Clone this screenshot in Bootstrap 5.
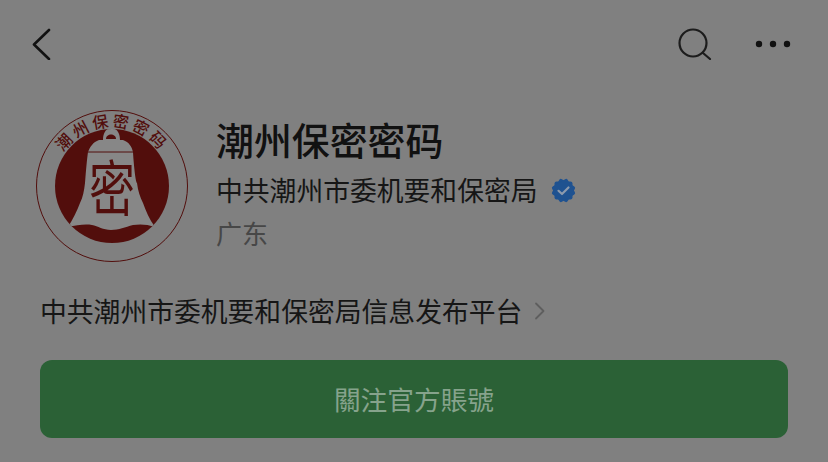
<!DOCTYPE html>
<html lang="zh-CN">
<head>
  <meta charset="UTF-8" />
  <title>潮州保密密码</title>
  <link href="https://cdn.jsdelivr.net/npm/bootstrap@5.3.0/dist/css/bootstrap.min.css" rel="stylesheet" />
  <style>
    body {
      background: #808080;
      font-family: "Noto Sans CJK SC", "Liberation Sans", sans-serif;
      color: #161616;
      height: 462px;
      overflow: hidden;
    }
    .top-icons { padding: 28px 37px 0 32px; height: 109px; }
    .search-gap { gap: 43px; }
    .profile-row { padding-left: 35px; gap: 27px; height: 153px; }
    .logo-ring { width: 154px; height: 154px; overflow: visible; }
    .logo-label { font-size: 16px; font-weight: 500; letter-spacing: 3px; fill: #520e0c; }
    .seal-char { font-size: 46px; fill: #520e0c; }
    .acct-name { font-size: 37.9px; font-weight: 500; line-height: 52px; color: #111; margin: 4px 0 3px; }
    .acct-owner { font-size: 26.8px; line-height: 44px; gap: 12px; }
    .acct-region { font-size: 26px; line-height: 42px; color: #474747; }
    .acct-desc { font-size: 26.8px; line-height: 40px; padding-left: 40px; margin-top: 29px; gap: 12px; }
    .follow-btn {
      width: 748px;
      height: 78px;
      margin: 29px 0 0 40px;
      background: #2b6136;
      border: 0;
      border-radius: 12px;
      color: #86a38c;
      font-family: "Noto Sans CJK TC", sans-serif;
      font-size: 26.7px;
    }
    .follow-btn:hover, .follow-btn:active { background: #2b6136 !important; color: #86a38c !important; }
  </style>
</head>
<body>

<!-- top bar -->
<div class="top-icons d-flex justify-content-between">
  <svg width="20" height="32" viewBox="0 0 20 32" fill="none" stroke="#121212" stroke-width="2.6" stroke-linecap="round" stroke-linejoin="round">
    <path d="M17 2 2 16.5 17 31" />
  </svg>
  <div class="d-flex search-gap">
    <svg width="34" height="32" viewBox="0 0 34 32" fill="none" stroke="#1c1c1c" stroke-width="2.2" stroke-linecap="round">
      <circle cx="15" cy="15" r="13.5" />
      <path d="M25 25 32 31" />
    </svg>
    <svg width="36" height="32" viewBox="0 0 36 32" fill="#111">
      <circle cx="4" cy="16" r="3.2" />
      <circle cx="18" cy="16" r="3.2" />
      <circle cx="32" cy="16" r="3.2" />
    </svg>
  </div>
</div>

<!-- account header -->
<div class="profile-row d-flex">
  <svg class="logo-ring flex-shrink-0" viewBox="0 0 154 154">
    <defs>
      <path id="labelArc" d="M18 77 A59 59 0 0 1 136 77" />
      <clipPath id="discClip"><circle cx="77" cy="77" r="57" /></clipPath>
    </defs>
    <circle cx="77" cy="77" r="75.5" fill="none" stroke="#520e0c" stroke-width="1" />
    <circle cx="77" cy="77" r="57" fill="#520e0c" />
    <!-- bell -->
    <path fill="#878787" clip-path="url(#discClip)" d="M68 31 C68 23 72 19 76 19 C81 19 85 23 85 31 H88 C94 33 97 38 98 43 C99 60 101 74 102 74 C103 82 105 88 108 94 C111 102 114 110 120 118 C112 115 104 115 98 116 C90 118 84 121 76 121 C68 121 63 117 57 116 C50 115 42 116 33 118 C38 110 42 102 45 94 C48 88 49 82 50 74 C51 60 52 50 53 43 C55 38 58 33 64 31 Z" />
    <path fill="#520e0c" d="M71 30 C71 24 81 24 81 30 Z" />
    <path stroke="#520e0c" stroke-width="1" d="M53 43 H98" />
    <text class="seal-char" text-anchor="middle" transform="translate(77 102) scale(1 1.3)">密</text>
    <text class="logo-label"><textPath href="#labelArc" startOffset="50%" text-anchor="middle">潮州保密密码</textPath></text>
  </svg>
  <div>
    <div class="acct-name">潮州保密密码</div>
    <div class="acct-owner d-flex align-items-center">
      <span>中共潮州市委机要和保密局</span>
      <svg width="27" height="27" viewBox="0 0 27 27">
        <g fill="#1f5290">
          <rect x="4.5" y="4.5" width="18" height="18" rx="2" />
          <rect x="4.5" y="4.5" width="18" height="18" rx="2" transform="rotate(30 13.5 13.5)" />
          <rect x="4.5" y="4.5" width="18" height="18" rx="2" transform="rotate(60 13.5 13.5)" />
        </g>
        <path d="M8.5 13.8 12 17 18.5 10.5" fill="none" stroke="#8c9aad" stroke-width="2.2" stroke-linecap="round" stroke-linejoin="round" />
      </svg>
    </div>
    <div class="acct-region">广东</div>
  </div>
</div>

<!-- description -->
<div class="acct-desc d-flex align-items-center">
  <span>中共潮州市委机要和保密局信息发布平台</span>
  <svg width="11" height="18" viewBox="0 0 11 18" fill="none" stroke="#5e5e5e" stroke-width="1.8" stroke-linecap="round" stroke-linejoin="round">
    <path d="M2 1.5 9.5 9 2 16.5" />
  </svg>
</div>

<button type="button" class="btn follow-btn d-block">關注官方賬號</button>

<script src="https://cdn.jsdelivr.net/npm/bootstrap@5.3.0/dist/js/bootstrap.bundle.min.js"></script>
</body>
</html>
